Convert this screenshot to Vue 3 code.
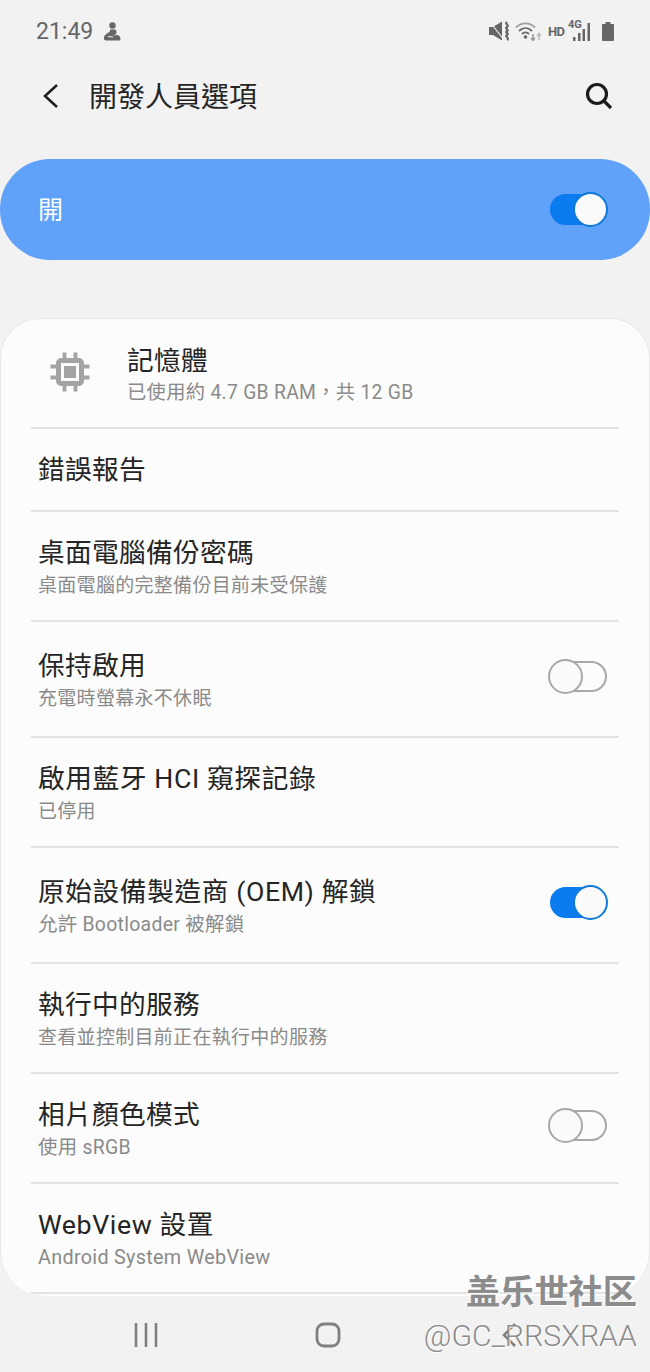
<script setup>
const rows = [
  { title: '錯誤報告', kind: 'short' },
  { title: '桌面電腦備份密碼', sub: '桌面電腦的完整備份目前未受保護' },
  { title: '保持啟用', sub: '充電時螢幕永不休眠', toggle: 'off', kind: 'tall' },
  { title: '啟用藍牙 HCI 窺探記錄', titleKind: 'wide', sub: '已停用' },
  { title: '原始設備製造商 (OEM) 解鎖', titleKind: 'wide', sub: '允許 Bootloader 被解鎖', subKind: 'mixed', toggle: 'on', kind: 'tall' },
  { title: '執行中的服務', sub: '查看並控制目前正在執行中的服務' },
  { title: '相片顏色模式', sub: '使用 sRGB', subKind: 'mixed', toggle: 'off' },
  { title: 'WebView 設置', titleKind: 'wide', sub: 'Android System WebView', subKind: 'latin' }
]
</script>

<template>
  <main class="app">
    <div class="status">
      <div class="status-left">
        <span class="time">21:49</span>
        <svg class="bixby" width="18" height="19" viewBox="0 0 18 19">
          <circle cx="9.500" cy="3.500" r="3.200" fill="#666" />
          <path d="M7 7.500h5.500c1.500 2 1.500 4 0 5l-3 1 5-.5c2 .5 3 2 3 4.500l-1 1H3c-2-.5-2.500-2-2-3.500.5-2 3-3.500 4.500-4.500C7 10.500 7 9 7 7.500z" fill="#666" />
          <path d="M5 14.500l5 .5" stroke="#f2f2f2" stroke-width="1.200" />
        </svg>
      </div>
      <div class="status-right">
        <svg width="22" height="20" viewBox="0 0 22 20">
          <path d="M0 6h4l9-5.500v19L4 14H0z" fill="#666" />
          <path d="M1 1l14 18" stroke="#f2f2f2" stroke-width="1.200" />
          <path d="M18 1c-3 2 3 3 0 5s3 3 0 4 3 3 0 4 3 3 0 5" fill="none" stroke="#666" stroke-width="2.200" />
        </svg>
        <svg class="wifi" width="26" height="20" viewBox="0 0 26 20">
          <path d="M1 6.500c5.500-5.500 13.500-5.500 19 0" fill="none" stroke="#a0a0a0" stroke-width="1.800" />
          <path d="M4 10c4-3.800 9-3.800 13 0" fill="none" stroke="#666" stroke-width="1.800" />
          <path d="M7 13c2-2 5-2 7 0" fill="none" stroke="#666" stroke-width="1.800" />
          <circle cx="10.500" cy="16" r="1.800" fill="#666" />
          <path d="M18 13v6M16 17l2 2.500 2-2.500" fill="none" stroke="#999" stroke-width="1.500" />
          <path d="M24 19v-6M22 15l2-2.500 2 2.500" fill="none" stroke="#bbb" stroke-width="1.500" />
        </svg>
        <span class="hd">HD</span>
        <div class="signal">
          <span class="lte">4G</span>
          <svg width="22" height="18" viewBox="0 0 22 18">
            <path d="M5 14h2.500v4H5zM10 10h2.500v8H10zM14.500 6H17v12h-2.500zM19.500 0H22v18h-2.500z" fill="#666" />
          </svg>
        </div>
        <svg class="battery" width="12" height="19" viewBox="0 0 12 19">
          <path d="M3.500 0h5v2H11a1 1 0 0 1 1 1v15a1 1 0 0 1-1 1H1a1 1 0 0 1-1-1V3a1 1 0 0 1 1-1h2.500z" fill="#666" />
        </svg>
      </div>
    </div>

    <header class="head">
      <svg class="back" width="18" height="26" viewBox="0 0 18 26">
        <path d="M15 2L3 13l12 11" fill="none" stroke="#222" stroke-width="2.600" />
      </svg>
      <h1>開發人員選項</h1>
      <svg class="search" width="30" height="30" viewBox="0 0 30 30">
        <circle cx="13" cy="13" r="9.500" fill="none" stroke="#1b1b1b" stroke-width="3.200" />
        <path d="M20 20l7 7" stroke="#1b1b1b" stroke-width="3.200" />
      </svg>
    </header>

    <section class="master">
      <span class="master-label">開</span>
      <span class="toggle on"></span>
    </section>

    <section class="card">
      <div class="row memory">
        <svg class="chip" width="42" height="42" viewBox="0 0 42 42">
          <rect x="9.500" y="9.500" width="23" height="23" rx="2.500" fill="none" stroke="#a3a3a3" stroke-width="5" />
          <rect x="15" y="15" width="12" height="12" fill="#a3a3a3" />
          <path d="M1.500 15.500h7M1.500 26.500h7M33.500 15.500h7M33.500 26.500h7M15.500 1.500v7M26.500 1.500v7M15.500 33.500v7M26.500 33.500v7" stroke="#a3a3a3" stroke-width="3.800" />
        </svg>
        <div class="text">
          <div class="title">記憶體</div>
          <div class="sub mixed memory-sub">已使用約 4.7 GB RAM，共 12 GB</div>
        </div>
      </div>
      <div v-for="row in rows" :key="row.title" class="row" :class="row.kind">
        <div class="text">
          <div class="title" :class="row.titleKind">{{ row.title }}</div>
          <div v-if="row.sub" class="sub" :class="row.subKind">{{ row.sub }}</div>
        </div>
        <span v-if="row.toggle" class="toggle" :class="row.toggle"></span>
      </div>
    </section>

    <nav class="nav">
      <svg width="26" height="26" viewBox="0 0 26 26">
        <path d="M3 1v24M13 1v24M23 1v24" stroke="#808080" stroke-width="2.600" />
      </svg>
      <svg width="26" height="26" viewBox="0 0 26 26">
        <rect x="2" y="2" width="22" height="22" rx="7" fill="none" stroke="#808080" stroke-width="2.800" />
      </svg>
      <svg width="26" height="26" viewBox="0 0 26 26">
        <path d="M18 2L7 13l11 11" fill="none" stroke="#808080" stroke-width="2.600" />
      </svg>
    </nav>

    <div class="mark">
      <div class="mark-top">盖乐世社区</div>
      <div class="mark-bottom">@GC_RRSXRAA</div>
    </div>
  </main>
</template>

<style>
body {
  background: #f2f2f2;
}
</style>

<style scoped>
* {
  box-sizing: border-box;
  margin: 0;
  padding: 0;
}

.app {
  position: relative;
  height: 1372px;
  overflow: hidden;
  background: #f2f2f2;
  font-family: Roboto, "Noto Sans CJK TC", sans-serif;
  color: #252525;
}

.status {
  height: 62px;
  padding: 0 36px;
  display: flex;
  align-items: center;
  justify-content: space-between;
  color: #666;
}

.status-left,
.status-right {
  display: flex;
  align-items: center;
}

.time {
  font-size: 23px;
}

.bixby {
  margin-left: 10px;
}

.wifi {
  margin-left: 4px;
}

.hd {
  margin-left: 7px;
  width: 16px;
  font-size: 13px;
  font-weight: 700;
  letter-spacing: -0.6px;
}

.signal {
  position: relative;
  margin-left: 4px;
  margin-top: 2px;
  width: 22px;
  height: 18px;
}

.lte {
  position: absolute;
  left: 0;
  top: -5px;
  font-size: 11px;
  font-weight: 700;
  background: #f2f2f2;
  line-height: 13px;
}

.signal svg {
  display: block;
}

.battery {
  margin-left: 12px;
}

.head {
  height: 68px;
  padding: 0 36px 0 42px;
  display: flex;
  align-items: center;
}

.head h1 {
  margin-left: 29px;
  padding-bottom: 2px;
  font-size: 28px;
  font-weight: 400;
  flex: 1;
}

.master {
  margin-top: 29px;
  height: 101px;
  padding: 0 43px 0 38px;
  border-radius: 50px;
  background: #60a1f9;
  color: #fff;
  font-size: 25px;
  display: flex;
  align-items: center;
  justify-content: space-between;
}

.master-label {
  padding-bottom: 4px;
}

.toggle {
  position: relative;
  display: block;
  flex: none;
  width: 57px;
  height: 31px;
  border-radius: 16px;
  border: 2px solid #a8a8a8;
}

.row .toggle {
  margin-bottom: 3px;
}

.toggle::after {
  content: "";
  box-sizing: border-box;
  position: absolute;
  top: -4px;
  left: -4px;
  width: 35px;
  height: 35px;
  border-radius: 50%;
  border: 2px solid #a8a8a8;
  background: #fafafa;
}

.toggle.on {
  background: #0a7cf0;
  border-color: #0a7cf0;
}

.toggle.on::after {
  left: 21px;
  border-color: #0f7ad8;
}

.card {
  margin-top: 58px;
  height: 978px;
  padding: 0 30px;
  border: 1px solid #e8e8e8;
  border-bottom: 0;
  border-radius: 40px 40px 44px 44px;
  background: #fcfcfc;
  overflow: hidden;
}

.row {
  height: 110px;
  padding: 0 12px 2px 7px;
  border-bottom: 2px solid #e3e3e3;
  display: flex;
  align-items: center;
  justify-content: space-between;
}

.row.short {
  height: 83px;
}

.row.short .text {
  padding-top: 2px;
}

.row.tall {
  height: 116px;
}

.memory {
  justify-content: flex-start;
  padding-left: 18px;
}

.memory .text {
  padding-top: 8px;
}

.chip {
  margin-right: 36px;
}

.text {
  padding-top: 7px;
}

.title {
  font-size: 26.700px;
  letter-spacing: 0.3px;
  line-height: 34px;
}

.title.wide {
  letter-spacing: 0.6px;
}

.sub {
  font-size: 19px;
  letter-spacing: 0.3px;
  line-height: 31px;
  color: #8a8a8a;
}

.sub.mixed {
  font-size: 19.400px;
}

.sub.memory-sub {
  font-size: 19.300px;
  line-height: 30px;
}

.sub.latin {
  font-size: 19.800px;
}

.nav {
  position: absolute;
  left: 133px;
  top: 1322px;
  display: flex;
  gap: 156px;
}

.mark {
  position: absolute;
  top: 1267px;
  right: 13px;
  text-align: right;
  color: #8c8c8c;
  text-shadow: 1px 1px 0 #fff;
}

.mark-top {
  font-family: "Noto Sans CJK SC", sans-serif;
  font-size: 34.200px;
  line-height: 44px;
  font-weight: 700;
}

.mark-bottom {
  margin-top: 6px;
  font-size: 30.300px;
  line-height: 38px;
  font-weight: 300;
}
</style>
